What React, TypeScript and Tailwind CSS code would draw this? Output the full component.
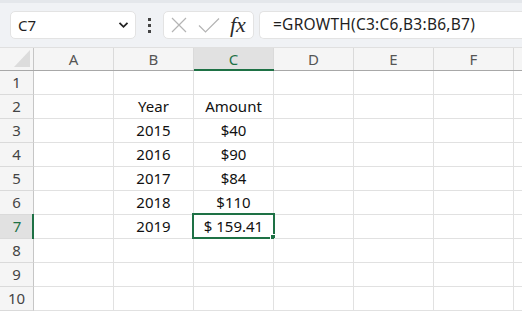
import React from "react";

const cols = ["A", "B", "C", "D", "E", "F"];

const data: Record<number, Record<string, string>> = {
  2: { B: "Year", C: "Amount" },
  3: { B: "2015", C: "$40" },
  4: { B: "2016", C: "$90" },
  5: { B: "2017", C: "$84" },
  6: { B: "2018", C: "$110" },
  7: { B: "2019", C: "$ 159.41" },
};

export default function App() {
  const font = { fontFamily: '"Segoe UI", "Noto Sans", "Open Sans", sans-serif' };
  return (
    <div className="w-[522px] h-[312px] overflow-hidden bg-white relative" style={font}>
      {/* toolbar */}
      <div className="h-[47px] bg-[#f0f2f5] flex items-center pl-[10px] gap-0 border-t-[3px] border-[#e4e7eb]">
        <div className="w-[126px] h-[28px] bg-white rounded-[5px] border border-[#e3e3e3] flex items-center pl-[7px] pr-[6px] justify-between">
          <span className="text-[15px] text-[#1f1f1f]">C7</span>
          <svg width="11" height="8" viewBox="0 0 11 8">
            <path d="M1.5 1.8 L5.5 5.8 L9.5 1.8" fill="none" stroke="#222" strokeWidth="1.8" />
          </svg>
        </div>
        <div className="w-[27px] flex flex-col items-center justify-center gap-[3px]">
          <div className="w-[3px] h-[3px] bg-[#444]" />
          <div className="w-[3px] h-[3px] bg-[#444]" />
          <div className="w-[3px] h-[3px] bg-[#444]" />
        </div>
        <div className="w-[91px] h-[28px] bg-white rounded-[5px] border border-[#e3e3e3] flex items-center pl-[7px]">
          <svg width="16" height="16" viewBox="0 0 16 16">
            <path d="M1 1 L15 15 M15 1 L1 15" stroke="#b4b4b4" strokeWidth="1.2" fill="none" />
          </svg>
          <svg width="22" height="16" viewBox="0 0 22 16" className="ml-[11px]">
            <path d="M1 8.5 L7.5 15 L21 1.5" stroke="#b4b4b4" strokeWidth="1.2" fill="none" />
          </svg>
          <span
            className="ml-[10px] text-[22px] italic text-[#2a2a2a] leading-none"
            style={{ fontFamily: '"Liberation Serif", "DejaVu Serif", serif' }}
          >
            fx
          </span>
        </div>
        <div className="ml-[5px] flex-1 h-[28px] bg-white rounded-l-[5px] border border-r-0 border-[#e3e3e3] flex items-center pl-[13px]">
          <span className="text-[15.5px] text-[#1f1f1f] tracking-[0.25px]">=GROWTH(C3:C6,B3:B6,B7)</span>
        </div>
      </div>

      {/* header row */}
      <div className="flex h-[24px] bg-[#f5f5f5] border-t border-[#e0e0e0] border-b border-b-[#a8a8a8]">
        <div className="w-[34px] shrink-0 border-r border-[#c6c6c6] relative">
          <svg width="16" height="17" viewBox="0 0 16 17" className="absolute right-[3px] bottom-[3px]">
            <path d="M16 0 L16 17 L0 17 Z" fill="#dcdcdc" />
          </svg>
        </div>
        {cols.map((c) => (
          <div
            key={c}
            className={
              c === "C"
                ? "w-[80px] shrink-0 border-r border-[#dadada] flex items-center justify-center text-[15px] text-[#1e7145] bg-[#e1e1e1] relative"
                : "w-[80px] shrink-0 border-r border-[#dadada] flex items-center justify-center text-[15px] text-[#555]"
            }
          >
            {c}
            {c === "C" && <div className="absolute left-0 right-[-1px] bottom-[-1px] h-[2px] bg-[#1e7145]" />}
          </div>
        ))}
        <div className="flex-1" />
      </div>

      {/* rows */}
      {Array.from({ length: 10 }, (_, i) => i + 1).map((r) => (
        <div key={r} className="flex h-[24px]">
          <div
            className={
              r === 7
                ? "w-[34px] shrink-0 bg-[#e1e1e1] border-b border-[#dadada] flex items-center justify-center text-[15px] text-[#1e7145] relative"
                : "w-[34px] shrink-0 bg-[#f5f5f5] border-r border-[#c6c6c6] border-b border-b-[#dadada] flex items-center justify-center text-[15px] text-[#444]"
            }
          >
            {r}
            {r === 7 && <div className="absolute right-0 top-[-1px] bottom-[-1px] w-[2px] bg-[#1e7145]" />}
          </div>
          {cols.map((c) => (
            <div
              key={c}
              className="w-[80px] shrink-0 border-r border-b border-[#e1e1e1] flex items-center justify-center text-[15px] text-[#111] relative"
            >
              {data[r]?.[c] ?? ""}
              {r === 7 && c === "C" && (
                <div className="absolute -left-[2px] -top-[2px] w-[83px] h-[26px] border-2 border-[#1e7145]">
                  <div className="absolute -right-[3px] -bottom-[3px] w-[6px] h-[6px] bg-[#1e7145] border border-white" />
                </div>
              )}
            </div>
          ))}
          <div className="flex-1 border-b border-[#e1e1e1]" />
        </div>
      ))}
    </div>
  );
}
